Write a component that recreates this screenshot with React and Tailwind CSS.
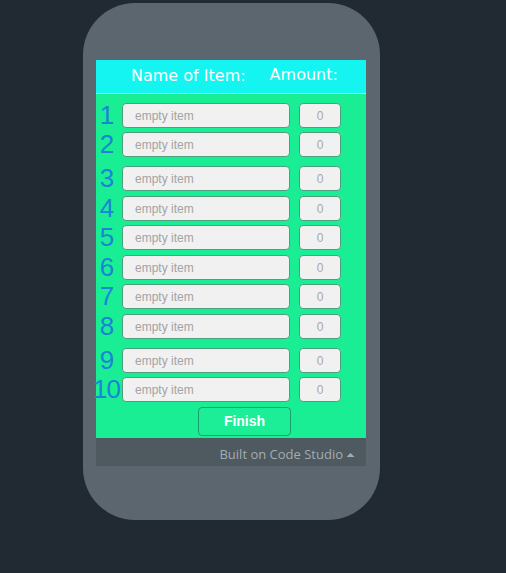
const rows = [
    { n: 1, gap: "mt-[9px]" },
    { n: 2, gap: "mt-[4px]" },
    { n: 3, gap: "mt-[9px]" },
    { n: 4, gap: "mt-[5px]" },
    { n: 5, gap: "mt-[4px]" },
    { n: 6, gap: "mt-[5px]" },
    { n: 7, gap: "mt-[4px]" },
    { n: 8, gap: "mt-[5px]" },
    { n: 9, gap: "mt-[9px]" },
    { n: 10, gap: "mt-[4px]" },
];

const ItemRow = ({ n, gap }) => (
    <div className={`flex items-center ${gap}`}>
        <div className="w-[29px] ml-[-4px] text-center text-[26px] leading-[25px] text-[#1a84d6] font-['Liberation_Sans',sans-serif] tracking-[-1px]">
            {n}
        </div>
        <input
            placeholder="empty item"
            className="ml-[1px] w-[168px] h-[25px] rounded-[4px] border-[1.5px] border-[#4f9f7f] bg-[#f1f1f1] pl-3 text-[12px] outline-none font-['Liberation_Sans',sans-serif] placeholder:text-[#a3a3a3]"
        />
        <input
            placeholder="0"
            className="ml-[9px] w-[42px] h-[25px] rounded-[4px] border-[1.5px] border-[#4f9f7f] bg-[#f1f1f1] text-center text-[12px] outline-none font-['Liberation_Sans',sans-serif] placeholder:text-[#a8a8a8]"
        />
    </div>
);

export default function App() {
    return (
        <div className="w-[506px] h-[573px] bg-[#212a32] overflow-hidden pt-[3px]">
            <div className="ml-[83px] w-[297px] h-[517px] rounded-[52px] bg-[#5b666e] pt-[57px] px-[13px]">
                {/* app screen */}
                <div className="w-[270px]">
                    <div className="h-[34px] bg-[#14f4f0] flex items-center text-white text-[16px] font-['DejaVu_Sans',sans-serif] border-b border-[#9ff7e0]">
                        <span className="ml-[35px] mt-[-1px]">Name of Item:</span>
                        <span className="ml-[24px] mt-[-4px]">Amount:</span>
                    </div>
                    <div className="h-[344px] bg-[#19ee95] flex flex-col">
                        {rows.map((r) => (
                            <ItemRow key={r.n} n={r.n} gap={r.gap} />
                        ))}
                        <button className="mt-[5px] ml-[102px] w-[93px] h-[29px] rounded-[4px] border-[1.5px] border-[#1aa06c] bg-[#1cee98] text-white text-[14px] font-bold font-['Liberation_Sans',sans-serif]">
                            Finish
                        </button>
                    </div>
                    <div className="h-[28px] bg-[#4e5960] flex items-center justify-end pr-[11px] pt-[5px] text-[13px] text-[#a4acb2] font-['Open_Sans',sans-serif]">
                        <span>Built on Code Studio</span>
                        <svg width="9" height="6" viewBox="0 0 9 6" className="ml-[3px]">
                            <path d="M0.5 5 L4.5 1 L8.5 5 Z" fill="#a4acb2" />
                        </svg>
                    </div>
                </div>
            </div>
        </div>
    );
}
